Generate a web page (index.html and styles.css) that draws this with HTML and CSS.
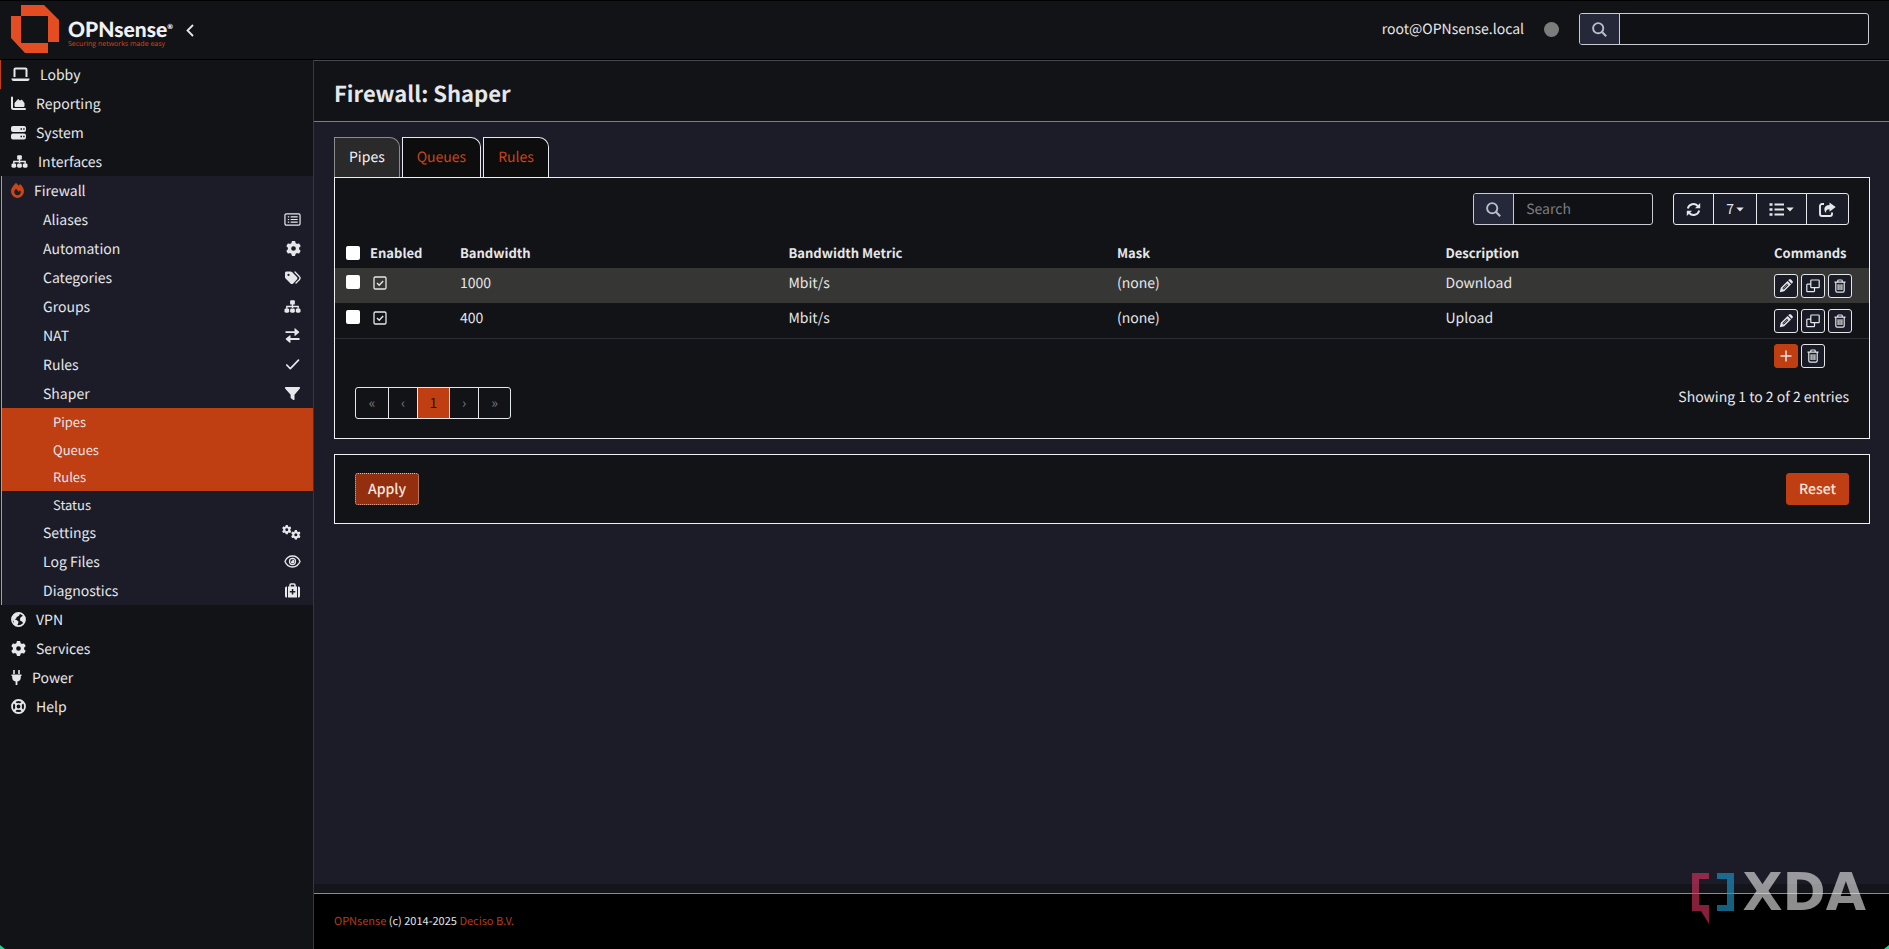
FILE: index.html
```html
<!DOCTYPE html>
<html lang="en">
<head>
<meta charset="utf-8">
<title>Shaper | Firewall | OPNsense.local</title>
<link rel="stylesheet" href="styles.css">
</head>
<body>
<svg class="sprite" aria-hidden="true">
  <symbol id="i-laptop" viewBox="0 0 19 15"><path d="M3.5 10V2.500a1 1 0 0 1 1-1h10a1 1 0 0 1 1 1V10" fill="none" stroke="currentColor" stroke-width="2"/><path d="M.5 11.500h18v.5a2 2 0 0 1-2 2h-14a2 2 0 0 1-2-2z"/></symbol>
  <symbol id="i-area" viewBox="0 0 15 15"><path d="M1 1.500v10a1.500 1.500 0 0 0 1.500 1.500H14" fill="none" stroke="currentColor" stroke-width="2" stroke-linecap="round"/><path d="M4 10V7l3-3.500 2 1.700L10.700 4 13 7v3.500H4z" stroke="currentColor" stroke-linejoin="round"/></symbol>
  <symbol id="i-server" viewBox="0 0 15 15"><path fill-rule="evenodd" d="M2 1h11a2 2 0 0 1 2 2v2a2 2 0 0 1-2 2H2a2 2 0 0 1-2-2V3a2 2 0 0 1 2-2zm7.500 2.300v1.400H11V3.300zm2.700 0v1.400h1.400V3.300zM2 8.500h11a2 2 0 0 1 2 2v2a2 2 0 0 1-2 2H2a2 2 0 0 1-2-2v-2a2 2 0 0 1 2-2zm7.500 2.300v1.400H11v-1.400zm2.700 0v1.400h1.400v-1.400z"/></symbol>
  <symbol id="i-sitemap" viewBox="0 0 18 15"><path d="M9 4v5M3 10V7.500h12V10" fill="none" stroke="currentColor" stroke-width="1.500"/><rect x="6.500" y="1" width="5" height="4.500" rx="1"/><rect x=".5" y="9.500" width="5" height="4.500" rx="1.500"/><rect x="6.500" y="9.500" width="5" height="4.500" rx="1.500"/><rect x="12.500" y="9.500" width="5" height="4.500" rx="1.500"/></symbol>
  <symbol id="i-fire" viewBox="0 0 448 512"><path d="M159.300 5.400c7.800-7.300 19.900-7.200 27.700 .1c27.600 25.900 53.500 53.800 77.700 84c11-14.400 23.500-30.100 37-42.900c7.900-7.400 20.100-7.400 28 .1c34.600 33 63.900 76.600 84.500 118c20.300 40.800 33.800 82.500 33.800 111.900C448 404.200 348.200 512 224 512C98.400 512 0 404.100 0 276.500c0-38.400 17.800-85.300 45.400-131.700C73.300 97.700 112.700 48.600 159.300 5.400zM225.700 416c25.300 0 47.700-7 68.800-21c42.100-29.400 53.400-88.200 28.100-134.400c-4.500-9-16-9.600-22.500-2l-25.200 29.300c-6.600 7.600-18.500 7.400-24.700-.5c-16.500-21-46-58.500-62.800-79.800c-6.300-8-18.300-8.100-24.700-.1c-33.800 42.500-50.800 69.300-50.800 99.400C112 375.400 162.600 416 225.700 416z"/></symbol>
  <symbol id="i-list-alt" viewBox="0 0 18 15"><rect x="1" y="1.500" width="16" height="12" rx="1.500" fill="none" stroke="currentColor" stroke-width="1.300"/><path d="M4 4.700h1.500M4 7.500h1.500M4 10.300h1.500M7 4.700h7.500M7 7.500h7.500M7 10.300h7.500" stroke="currentColor" stroke-width="1.300"/></symbol>
  <symbol id="i-gear" viewBox="0 0 512 512"><path d="M495.900 166.600c3.200 8.700 .5 18.400-6.400 24.600l-43.300 39.400c1.100 8.300 1.700 16.800 1.700 25.400s-.6 17.100-1.700 25.400l43.300 39.400c6.900 6.200 9.600 15.900 6.400 24.600c-4.400 11.900-9.700 23.300-15.800 34.300l-4.700 8.100c-6.600 11-14 21.400-22.100 31.200c-5.900 7.200-15.700 9.600-24.500 6.800l-55.700-17.700c-13.400 10.300-28.200 18.900-44 25.400l-12.500 57.100c-2 9.100-9 16.300-18.200 17.800c-13.800 2.300-28 3.500-42.500 3.500s-28.700-1.200-42.500-3.500c-9.200-1.500-16.200-8.700-18.200-17.800l-12.500-57.100c-15.800-6.500-30.600-15.100-44-25.400L83.100 425.900c-8.800 2.800-18.600 .3-24.500-6.800c-8.100-9.800-15.500-20.200-22.100-31.200l-4.700-8.100c-6.100-11-11.400-22.400-15.800-34.300c-3.200-8.700-.5-18.400 6.400-24.600l43.300-39.400C64.600 273.100 64 264.600 64 256s.6-17.100 1.700-25.400L22.400 191.200c-6.900-6.200-9.600-15.900-6.400-24.600c4.400-11.900 9.700-23.300 15.800-34.300l4.700-8.100c6.600-11 14-21.400 22.100-31.200c5.900-7.200 15.700-9.600 24.500-6.800l55.700 17.700c13.400-10.300 28.200-18.900 44-25.400l12.500-57.100c2-9.100 9-16.300 18.200-17.800C227.300 1.200 241.500 0 256 0s28.700 1.200 42.500 3.500c9.200 1.500 16.200 8.700 18.200 17.800l12.500 57.100c15.800 6.500 30.600 15.100 44 25.400l55.700-17.700c8.800-2.800 18.600-.3 24.500 6.800c8.100 9.800 15.500 20.200 22.100 31.200l4.700 8.100c6.100 11 11.400 22.400 15.800 34.300zM256 336a80 80 0 1 0 0-160 80 80 0 1 0 0 160z"/></symbol>
  <symbol id="i-gears" viewBox="0 0 19 15"><use href="#i-gear" x="0" y="0" width="9.500" height="9.500"/><use href="#i-gear" x="9" y="5" width="9.700" height="9.700"/></symbol>
  <symbol id="i-tags" viewBox="0 0 17 15"><path fill-rule="evenodd" d="M1 3v4.200c0 .5.200 1 .6 1.300l4.900 4.900c.8.800 2 .8 2.700 0l3.700-3.800c.7-.7.7-1.900 0-2.600L8 2.100a2 2 0 0 0-1.400-.6H2.500C1.700 1.500 1 2.200 1 3zm3.500.8a1.100 1.100 0 1 1 0 2.200 1.100 1.100 0 0 1 0-2.200z"/><path d="M11 2l4.300 4.500c1 1 1 2.200 0 3.300L12 13" fill="none" stroke="currentColor" stroke-width="1.300" stroke-linecap="round"/></symbol>
  <symbol id="i-exchange" viewBox="0 0 16 15"><path d="M1 3.200h9V.8c0-.4.500-.6.800-.3l3.800 3.300c.3.200.3.600 0 .8l-3.800 3.200c-.3.300-.8.100-.8-.3V5H1zM15 10H6V7.700c0-.4-.5-.6-.8-.3L1.400 10.600c-.3.200-.3.600 0 .8l3.800 3.300c.3.300.8.100.8-.3V12h9z"/></symbol>
  <symbol id="i-check" viewBox="0 0 16 15"><path d="M2.300 8l3.500 3.600L14 3.200" fill="none" stroke="currentColor" stroke-width="1.700" stroke-linecap="round" stroke-linejoin="round"/></symbol>
  <symbol id="i-filter" viewBox="0 0 16 15"><path d="M1.300 1h13.400c.8 0 1.200.9.700 1.500L10 8.700v4.700c0 .6-.7.900-1.200.6l-2.300-1.700a1 1 0 0 1-.4-.8V8.700L.6 2.500C.1 1.900.5 1 1.300 1z"/></symbol>
  <symbol id="i-eye" viewBox="0 0 18 15"><path d="M1 7.500C2.500 4 5.500 1.700 9 1.700S15.500 4 17 7.500c-1.500 3.500-4.500 5.800-8 5.800S2.500 11 1 7.500z" fill="none" stroke="currentColor" stroke-width="1.400"/><circle cx="9" cy="7.500" r="3.200" fill="none" stroke="currentColor" stroke-width="1.300"/><path d="M9 5.500a2 2 0 1 1-2 2c1.300.2 2.200-.7 2-2z"/></symbol>
  <symbol id="i-medkit" viewBox="0 0 16 15"><path d="M5.500 4V2a1 1 0 0 1 1-1h3a1 1 0 0 1 1 1v2" fill="none" stroke="currentColor" stroke-width="1.500"/><path d="M2.500 3.500v11H2a1.500 1.500 0 0 1-1.500-1.500V5A1.500 1.500 0 0 1 2 3.500zm11 0v11h.5a1.500 1.500 0 0 0 1.500-1.500V5A1.500 1.500 0 0 0 14 3.500z"/><path fill-rule="evenodd" d="M3.500 3.500h9v11h-9zM7.300 6v2H5.300v1.600h2v2h1.500v-2h2V8h-2V6z"/></symbol>
  <symbol id="i-globe" viewBox="0 0 15 15"><circle cx="7.500" cy="7.500" r="6.600" fill="none" stroke="currentColor" stroke-width="1.600"/><path d="M1.500 4.500L4 1.700 8 1l.8 1.700-1.500 1.500L5.700 5l-.5 1.500-1.600.8L5.500 8l2 1.500-.3 1.700L5.800 14 3 12.500 2.500 9 1 7.500zM10 5l2.500-1.500L14 6v3l-1.500 2.500-1.500-2-1.800-.8L9 6.500z"/></symbol>
  <symbol id="i-plug" viewBox="0 0 11 15"><path d="M2.200 0h1.600v4H2.200zM7.200 0h1.600v4H7.200zM.5 4.500h10V6h-.7v1.500A4.200 4.200 0 0 1 6.400 11.500V15H4.600v-3.500A4.200 4.200 0 0 1 1.200 7.500V6H.5z"/></symbol>
  <symbol id="i-ring" viewBox="0 0 15 15"><g fill="none" stroke="currentColor"><circle cx="7.500" cy="7.500" r="6.500" stroke-width="1.800"/><circle cx="7.500" cy="7.500" r="2.700" stroke-width="1.500"/><path d="M3 3l2.600 2.600M12 3L9.400 5.600M3 12l2.600-2.600M12 12L9.400 9.400" stroke-width="2.200"/></g></symbol>
  <symbol id="i-search" viewBox="0 0 15 15"><circle cx="6.200" cy="6.200" r="5.100" fill="none" stroke="currentColor" stroke-width="1.900"/><path d="M10 10l4.200 4.200" stroke="currentColor" stroke-width="2"/></symbol>
  <symbol id="i-refresh" viewBox="0 0 15 15"><path d="M1.800 6.500A5.800 5.800 0 0 1 11.800 4M13.200 8.500A5.800 5.800 0 0 1 3.200 11" fill="none" stroke="currentColor" stroke-width="1.900"/><path d="M14.200 1v5.300H9zM.8 14V8.700H6z"/></symbol>
  <symbol id="i-list" viewBox="0 0 15 15"><path d="M.5 2.500h3M.5 7.500h3M.5 12.500h3" stroke="currentColor" stroke-width="2.600"/><path d="M5.500 2.500H15M5.500 7.500H15M5.500 12.500H15" stroke="currentColor" stroke-width="1.800"/></symbol>
  <symbol id="i-caret" viewBox="0 0 8 5"><path d="M.3.500h7.400L4 4.600z"/></symbol>
  <symbol id="i-share" viewBox="0 0 17 15"><path d="M5 2H3a2 2 0 0 0-2 2v8a2 2 0 0 0 2 2h8a2 2 0 0 0 2-2v-1.500" fill="none" stroke="currentColor" stroke-width="1.900"/><path d="M10.500 3V.5L16.700 5l-6.200 4.700V7.300C7.500 7.300 6.800 8.500 7.200 11 4.500 9 4.300 3.200 10.500 3z"/></symbol>
  <symbol id="i-checkbox" viewBox="0 0 14 14"><rect x="1" y="1" width="12" height="12" rx="1.300" fill="none" stroke="currentColor" stroke-width="1.300"/><path d="M4 7l2.200 2.200L10.200 5" fill="none" stroke="currentColor" stroke-width="1.400"/></symbol>
  <symbol id="i-pencil" viewBox="0 0 14 14"><path fill-rule="evenodd" d="M.8 13.200l1-4.400L8.600 2l3.400 3.400-6.800 6.800zM3.300 9.300l1.400 1.400 4.800-4.800-.6-.6-4.400 4.400-.3-.3 4.400-4.400-.5-.5z"/><path d="M9.300 1.300l.7-.7c.6-.6 1.400-.6 2 0l1.400 1.400c.6.6.6 1.400 0 2l-.7.700z"/></symbol>
  <symbol id="i-clone" viewBox="0 0 14 14"><path d="M5.500 1h7a.7.700 0 0 1 .7.700V8a.7.700 0 0 1-.7.700h-7A.7.700 0 0 1 4.800 8V1.700A.7.700 0 0 1 5.500 1zM4.500 5.200h-3a.7.700 0 0 0-.7.700V12a.7.700 0 0 0 .7.700h6.300a.7.700 0 0 0 .7-.7V9" fill="none" stroke="currentColor" stroke-width="1.200"/></symbol>
  <symbol id="i-trash" viewBox="0 0 14 14"><path d="M1.500 3.200h11M4.800 3V1.800a.8.800 0 0 1 .8-.8h2.800a.8.800 0 0 1 .8.800V3M2.800 3.500v8.300a1.300 1.300 0 0 0 1.300 1.300h5.800a1.300 1.300 0 0 0 1.300-1.300V3.500M5.100 5.300V11M7 5.300V11M8.900 5.300V11" fill="none" stroke="currentColor" stroke-width="1.200"/></symbol>
  <symbol id="i-plus" viewBox="0 0 14 14"><path d="M7 1.500v11M1.500 7h11" stroke="currentColor" stroke-width="1.500"/></symbol>
</svg>

<header class="topbar">
  <a class="brand" href="#" aria-label="OPNsense home">
    <svg class="brand-mark" viewBox="0 0 48 48"><path fill="#e44d22" d="M10 0h23l15 15v22H37V11H10zM0 11h10v27h27v10H14L0 33z"/></svg>
    <span class="brand-text">
      <span class="brand-name">OPNsense<sup>®</sup></span>
      <span class="brand-tag">Securing networks made easy</span>
    </span>
  </a>
  <button class="collapse" aria-label="Collapse menu"><svg viewBox="0 0 8 13"><path d="M7 1L1.500 6.500 7 12" fill="none" stroke="currentColor" stroke-width="1.800"/></svg></button>
  <div class="topbar-right">
    <span>root@OPNsense.local</span>
    <span class="status-dot"></span>
    <label class="search search-top"><span class="addon"><svg class="icon w15"><use href="#i-search"/></svg></span><input type="text" aria-label="Search pages"></label>
  </div>
</header>

<div class="shell">
  <nav class="sidebar">
    <a class="item lobby" href="#"><svg class="icon w19"><use href="#i-laptop"/></svg>Lobby</a>
    <a class="item" href="#"><svg class="icon w15"><use href="#i-area"/></svg>Reporting</a>
    <a class="item" href="#"><svg class="icon w15"><use href="#i-server"/></svg>System</a>
    <a class="item" href="#"><svg class="icon w17"><use href="#i-sitemap"/></svg>Interfaces</a>
    <div class="group">
      <a class="item current" href="#"><svg class="icon w13"><use href="#i-fire"/></svg>Firewall</a>
      <a class="item sub" href="#">Aliases<svg class="icon w17"><use href="#i-list-alt"/></svg></a>
      <a class="item sub" href="#">Automation<svg class="icon w15"><use href="#i-gear"/></svg></a>
      <a class="item sub" href="#">Categories<svg class="icon w17"><use href="#i-tags"/></svg></a>
      <a class="item sub" href="#">Groups<svg class="icon w17"><use href="#i-sitemap"/></svg></a>
      <a class="item sub" href="#">NAT<svg class="icon w17"><use href="#i-exchange"/></svg></a>
      <a class="item sub" href="#">Rules<svg class="icon w17"><use href="#i-check"/></svg></a>
      <a class="item sub" href="#">Shaper<svg class="icon w17"><use href="#i-filter"/></svg></a>
      <div class="leaves">
        <a class="leaf on" href="#">Pipes</a>
        <a class="leaf on" href="#">Queues</a>
        <a class="leaf on" href="#">Rules</a>
        <a class="leaf" href="#">Status</a>
      </div>
      <a class="item sub" href="#">Settings<svg class="icon w19"><use href="#i-gears"/></svg></a>
      <a class="item sub" href="#">Log Files<svg class="icon w17"><use href="#i-eye"/></svg></a>
      <a class="item sub" href="#">Diagnostics<svg class="icon w17"><use href="#i-medkit"/></svg></a>
    </div>
    <a class="item" href="#"><svg class="icon w15"><use href="#i-globe"/></svg>VPN</a>
    <a class="item" href="#"><svg class="icon w15"><use href="#i-gear"/></svg>Services</a>
    <a class="item" href="#"><svg class="icon w11"><use href="#i-plug"/></svg>Power</a>
    <a class="item" href="#"><svg class="icon w15"><use href="#i-ring"/></svg>Help</a>
  </nav>

  <div class="page">
    <div class="page-head"><h1>Firewall: Shaper</h1></div>
    <main class="content">
      <div class="tabs">
        <a class="tab active" href="#">Pipes</a>
        <a class="tab" href="#">Queues</a>
        <a class="tab" href="#">Rules</a>
      </div>
      <section class="panel grid-panel">
        <div class="toolbar">
          <label class="search search-grid"><span class="addon"><svg class="icon w15"><use href="#i-search"/></svg></span><input type="text" placeholder="Search" aria-label="Search"></label>
          <div class="actions">
            <button aria-label="Refresh"><svg class="icon w15"><use href="#i-refresh"/></svg></button>
            <button>7<svg class="caret"><use href="#i-caret"/></svg></button>
            <button aria-label="Columns"><svg class="icon w15"><use href="#i-list"/></svg><svg class="caret"><use href="#i-caret"/></svg></button>
            <button aria-label="Export"><svg class="icon w17"><use href="#i-share"/></svg></button>
          </div>
        </div>
        <table class="grid">
          <colgroup><col class="c-select"><col class="c-enabled"><col><col><col><col><col class="c-commands"></colgroup>
          <thead>
            <tr><th><input type="checkbox" aria-label="Select all"></th><th>Enabled</th><th>Bandwidth</th><th>Bandwidth Metric</th><th>Mask</th><th>Description</th><th>Commands</th></tr>
          </thead>
          <tbody>
            <tr class="striped"><td><input type="checkbox" aria-label="Select Download"></td><td><svg class="tick"><use href="#i-checkbox"/></svg></td><td>1000</td><td>Mbit/s</td><td>(none)</td><td>Download</td>
              <td><div class="commands"><button aria-label="Edit"><svg><use href="#i-pencil"/></svg></button><button aria-label="Clone"><svg><use href="#i-clone"/></svg></button><button aria-label="Delete"><svg><use href="#i-trash"/></svg></button></div></td></tr>
            <tr><td><input type="checkbox" aria-label="Select Upload"></td><td><svg class="tick"><use href="#i-checkbox"/></svg></td><td>400</td><td>Mbit/s</td><td>(none)</td><td>Upload</td>
              <td><div class="commands"><button aria-label="Edit"><svg><use href="#i-pencil"/></svg></button><button aria-label="Clone"><svg><use href="#i-clone"/></svg></button><button aria-label="Delete"><svg><use href="#i-trash"/></svg></button></div></td></tr>
          </tbody>
          <tfoot>
            <tr><td colspan="6"></td><td><div class="commands"><button class="add" aria-label="Add"><svg><use href="#i-plus"/></svg></button><button aria-label="Delete selected"><svg><use href="#i-trash"/></svg></button></div></td></tr>
          </tfoot>
        </table>
        <div class="grid-foot">
          <div class="pager"><a href="#">«</a><a class="narrow" href="#">‹</a><a class="on" href="#">1</a><a class="narrow" href="#">›</a><a href="#">»</a></div>
          <span class="infos">Showing 1 to 2 of 2 entries</span>
        </div>
      </section>
      <section class="panel apply-panel">
        <button class="btn apply">Apply</button>
        <button class="btn">Reset</button>
      </section>
    </main>
    <footer class="footer"><p><a href="#">OPNsense</a> (c) 2014-2025 <a href="#">Deciso B.V.</a></p></footer>
  </div>
</div>

<div class="watermark">
  <svg viewBox="0 0 42 52"><path fill="#d8335d" d="M0 0h17v6H7v26h10v19L9 38H0z"/><path fill="#1f9bd0" d="M25 0h17v38H25v-6h10V6H25z"/></svg>
  <span>XDA</span>
</div>
<div class="corner left"></div>
<div class="corner right"></div>
</body>
</html>
```
FILE: styles.css
```css
* { box-sizing: border-box; }

body {
  margin: 0;
  min-height: 100vh;
  display: flex;
  flex-direction: column;
  background: #121317;
  color: #e6e7ea;
  font-family: "Noto Sans CJK SC", "Noto Sans", sans-serif;
  font-size: 14px;
  line-height: 20px;
  text-rendering: geometricPrecision;
}

a { color: inherit; text-decoration: none; }
button, input { font: inherit; color: inherit; text-rendering: inherit; }
svg { fill: currentColor; flex: none; display: block; }
.sprite { position: absolute; width: 0; height: 0; }

.icon { height: 15px; }
.w11 { width: 11px; }
.w13 { width: 13px; }
.w15 { width: 15px; }
.w17 { width: 17px; }
.w19 { width: 19px; }

/* Top bar */
.topbar {
  height: 60px;
  display: flex;
  align-items: center;
  padding: 0 20px 0 11px;
  border-top: 1px solid #000;
  border-bottom: 1px solid #000;
}
.brand { display: flex; align-items: center; gap: 9px; padding-bottom: 2px; }
.brand-mark { width: 48px; height: 48px; }
.brand-text { display: flex; flex-direction: column; padding-top: 12px; }
.brand-name {
  font: 900 21px/20px Lato, sans-serif;
  color: #f0f1f6;
}
.brand-name sup { font-size: 7px; line-height: 0; vertical-align: 8px; }
.brand-tag { font: 7px/10px "Open Sans", sans-serif; color: #d8441c; }
.collapse {
  margin-left: 9px;
  padding: 4px;
  border: 0;
  background: none;
}
.collapse svg { width: 8px; height: 13px; }
.topbar-right { margin-left: auto; display: flex; align-items: center; padding-bottom: 2px; }
.status-dot {
  width: 15px;
  height: 15px;
  margin: 0 20px;
  border-radius: 50%;
  background: #7c7c7c;
}

.search {
  display: flex;
  height: 32px;
  border: 1px solid #c9cbd3;
  border-radius: 3px;
  background: #101114;
  overflow: hidden;
}
.search .addon {
  width: 40px;
  display: flex;
  align-items: center;
  justify-content: center;
  border-right: 1px solid #c9cbd3;
  background: #242838;
  color: #b9bdca;
}
.search input {
  flex: 1;
  min-width: 0;
  padding: 0 12px;
  border: 0;
  outline: 0;
  background: none;
}
.search input::placeholder { color: #7d7e82; opacity: 1; }
.search-top { width: 290px; }
.search-grid { width: 180px; }

/* Sidebar */
.shell { flex: 1; display: flex; }
.sidebar { width: 314px; border-right: 1px solid #35373f; }
.item {
  display: flex;
  align-items: center;
  gap: 10px;
  height: 29px;
  padding: 0 12px 0 11px;
}
.lobby { border-left: 1px solid #c03f14; padding-left: 10px; }
.group {
  margin-left: 1px;
  border-left: 1px solid #e08b6c;
  background: #1b1c28;
}
.group .item { padding-left: 9px; }
.current .icon { color: #c94619; }
.group .sub { justify-content: space-between; padding-left: 41px; }
.leaves {
  display: grid;
  grid-template-rows: repeat(4, 1fr);
  height: 110px;
}
.leaf {
  padding-left: 51px;
  font-size: 13px;
  line-height: 27px;
}
.leaf.on { background: #bf3e12; }

/* Page */
.page {
  flex: 1;
  min-width: 0;
  display: flex;
  flex-direction: column;
  background: #1b1c28;
}
.page-head {
  height: 62px;
  padding: 16px 20px 0;
  border-top: 1px solid #46484f;
  border-bottom: 1px solid #7b7e85;
  background: #121317;
}
h1 { margin: 0; font-size: 22px; line-height: 32px; font-weight: 700; }
.content { flex: 1; padding: 15px 19px 16px 20px; }

.tabs { display: flex; gap: 2px; }
.tab {
  height: 40px;
  padding: 0 14px;
  border: 1px solid #e8e9ec;
  border-bottom: 0;
  border-top-right-radius: 10px;
  background: #0d0d0e;
  color: #c8431a;
  line-height: 38px;
}
.tab.active { background: #2a2a2a; border-color: #8c8c8e; color: #f4f4f5; }

.panel { border: 1px solid #f0f0f2; background: #121317; }
.toolbar {
  display: flex;
  justify-content: flex-end;
  gap: 20px;
  padding: 15px 20px 13px;
}
.actions { display: flex; }
.actions button {
  display: flex;
  align-items: center;
  justify-content: center;
  gap: 2px;
  height: 32px;
  padding: 0 12px;
  margin-left: -1px;
  border: 1px solid #e6e7ea;
  background: #1a1c27;
}
.actions button:first-child { border-radius: 3px 0 0 3px; margin-left: 0; }
.actions button:last-child { border-radius: 0 3px 3px 0; }
.caret { width: 8px; height: 5px; }

.grid { width: 100%; table-layout: fixed; border-collapse: collapse; }
.c-select { width: 30px; }
.c-enabled { width: 90px; }
.c-commands { width: 100px; }
.grid th, .grid td {
  padding: 5px;
  text-align: left;
  vertical-align: top;
  line-height: 20px;
}
.grid th { height: 30px; font-size: 13px; font-weight: 700; }
.grid td { height: 35px; }
.striped { background: #363635; }
.grid tbody { border-bottom: 1px solid #2c2d34; }
.grid input {
  appearance: none;
  display: block;
  width: 14px;
  height: 14px;
  margin: 2px 0 0 6px;
  border-radius: 2px;
  background: #fff;
}
.grid th input { margin-top: 3px; }
.tick { width: 14px; height: 14px; margin: 3px 0 0 3px; }
.commands { display: flex; gap: 3px; padding-top: 1px; }
.grid tfoot .commands { padding-top: 0; }
.commands button {
  display: flex;
  align-items: center;
  justify-content: center;
  width: 24px;
  height: 24px;
  padding: 0;
  border: 1px solid #e6e7ea;
  border-radius: 3px;
  background: #191b26;
}
.commands svg { width: 14px; height: 14px; }
.commands .add { background: #bf3e12; border-color: #bf3e12; }

.grid-foot {
  display: flex;
  justify-content: space-between;
  align-items: flex-start;
  padding: 13px 20px 19px;
}
.pager {
  display: flex;
  border: 1px solid #e6e7ea;
  border-radius: 3px;
  overflow: hidden;
}
.pager a {
  width: 32px;
  line-height: 30px;
  text-align: center;
  color: #77787c;
}
.pager .narrow { width: 29px; }
.pager a + a { border-left: 1px solid #e6e7ea; }
.pager .on { background: #bf3e12; color: #321006; }

.apply-panel {
  display: flex;
  justify-content: space-between;
  margin-top: 15px;
  padding: 18px 20px;
}
.btn {
  height: 32px;
  padding: 0 12px;
  border: 1px solid #bf3e12;
  border-radius: 3px;
  background: #bf3e12;
  font-weight: 500;
  color: #fbe6dd;
}
.btn.apply { background: #932e0e; border: 1px dotted #e8b7a4; }

.footer {
  height: 65px;
  border-top: 9px solid #14151b;
  background: #000;
  font-size: 11px;
}
.footer p {
  margin: 0;
  padding: 17px 20px;
  border-top: 1px solid #8b8b8b;
}
.footer a { color: #b53c18; }

/* Overlays */
.watermark {
  position: absolute;
  right: 23px;
  bottom: 24px;
  display: flex;
  gap: 9px;
  opacity: 0.62;
}
.watermark svg { width: 42px; height: 52px; }
.watermark span {
  font: bold 52px/40px "DejaVu Sans", sans-serif;
  color: #e6e6e6;
}
.corner { position: absolute; bottom: 0; width: 5px; height: 4px; background: #18d68c; }
.corner.left { left: 0; clip-path: polygon(0 0, 100% 100%, 0 100%); }
.corner.right { right: 0; clip-path: polygon(100% 0, 100% 100%, 0 100%); }
```
